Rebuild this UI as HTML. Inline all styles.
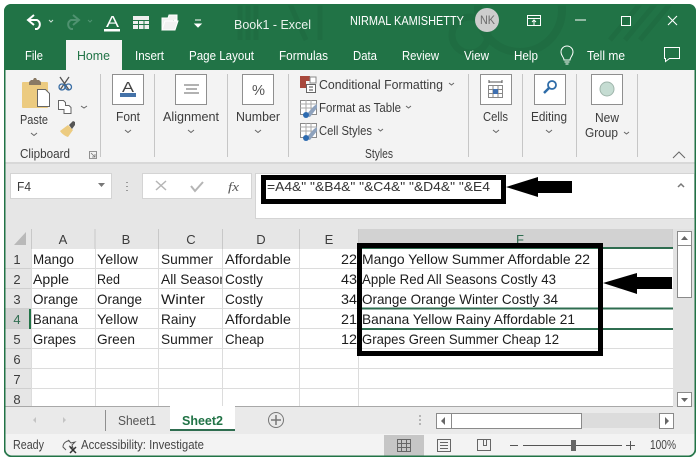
<!DOCTYPE html>
<html><head><meta charset="utf-8"><style>
html,body{margin:0;padding:0;background:#fff;width:699px;height:464px;overflow:hidden}
svg{display:block}
text{font-family:"Liberation Sans",sans-serif;font-size:13px;fill:#3c3c3c}
.w{fill:#fff}.d{fill:#1c1c1c}.g{stroke:#dcdcdc;stroke-width:1;fill:none}.c{fill:none;stroke:#666;stroke-width:1}
</style></head><body>
<svg width="699" height="464" viewBox="0 0 699 464" xmlns="http://www.w3.org/2000/svg">
<defs><clipPath id="win"><rect x="4" y="4" width="692" height="453" rx="7"/></clipPath>
<clipPath id="cc"><rect x="158" y="249" width="64" height="160"/></clipPath>
<clipPath id="ce"><rect x="299" y="249" width="58" height="160"/></clipPath></defs>
<g clip-path="url(#win)">
<rect x="4" y="4" width="692" height="453" fill="#217346"/>
<!-- watermark -->
<g stroke="#1f6d42" stroke-width="5" fill="none"><path d="M240 4v36M248 4v36M256 4v36M290 4l16 36M320 4v36"/><circle cx="470" cy="35" r="18" stroke-width="7"/><circle cx="520" cy="10" r="42" stroke-width="8"/><path d="M640 4l-30 36M655 4l-30 36M670 4l-30 36"/></g>
<!-- ribbon -->
<rect x="5" y="70" width="690" height="92" fill="#f3f3f3"/>
<rect x="5" y="162" width="690" height="2" fill="#d8d8d8"/>
<rect x="5" y="164" width="690" height="65" fill="#e6e6e6"/>
<rect x="66" y="40" width="56" height="30" fill="#f3f3f3"/>
<!-- QAT -->
<path d="M34 15l-6 5 6 5M28 20h9a5 5 0 0 1 0 9h-2" fill="none" stroke="#fff" stroke-width="2"/>
<path d="M49 20l2 2 2-2" fill="none" stroke="#cfe2d7"/>
<path d="M73 15l6 5-6 5M79 20h-8a5 5 0 0 0 0 9h2" fill="none" stroke="#4f9270" stroke-width="2"/>
<path d="M88 20l2 2 2-2" fill="none" stroke="#4f9270"/>
<text x="106" y="27" style="font-size:16px;fill:#fff" textLength="13" lengthAdjust="spacingAndGlyphs">A</text>
<rect x="104" y="29" width="16" height="2.500" fill="#fff"/>
<path d="M133 16h16v13h-16z" fill="#eee"/><path d="M133 20.500h16M133 24.500h16M138.500 20v9M144 20v9" stroke="#217346"/>
<path d="M162 30V18h6l1-3h8v5h-3M162 30l3-9h13l-3 9z" fill="#f1f1f1" stroke="#fff"/>
<path d="M195 20h6M195 24l3 3 3-3z" fill="#fff" stroke="#fff"/>
<text x="234" y="29" class="w" style="fill:#eaf2ed" textLength="77" lengthAdjust="spacingAndGlyphs">Book1 - Excel</text>
<text x="350" y="25" style="fill:#fff" textLength="114" lengthAdjust="spacingAndGlyphs">NIRMAL KAMISHETTY</text>
<circle cx="487" cy="20" r="12" fill="#cdcdcd"/>
<text x="480" y="24" style="fill:#6b6b6b;font-size:12px" textLength="15" lengthAdjust="spacingAndGlyphs">NK</text>
<path d="M527.500 15.500h13v10h-13zM527.500 18.500h13M534 25v-5M532 22l2-2 2 2" fill="none" stroke="#fff"/>
<path d="M575 20h11" stroke="#fff"/>
<rect x="621.500" y="16.500" width="9" height="9" fill="none" stroke="#fff"/>
<path d="M668 16l9 9M677 16l-9 9" stroke="#fff" stroke-width="1.100"/>
<!-- tabs -->
<g style="fill:#fff">
<text x="25" y="60" style="fill:#fff" textLength="18" lengthAdjust="spacingAndGlyphs">File</text>
<text x="77" y="60" style="fill:#217346" textLength="33" lengthAdjust="spacingAndGlyphs">Home</text>
<text x="135" y="60" style="fill:#fff" textLength="29" lengthAdjust="spacingAndGlyphs">Insert</text>
<text x="189" y="60" style="fill:#fff" textLength="65" lengthAdjust="spacingAndGlyphs">Page Layout</text>
<text x="279" y="60" style="fill:#fff" textLength="49" lengthAdjust="spacingAndGlyphs">Formulas</text>
<text x="353" y="60" style="fill:#fff" textLength="24" lengthAdjust="spacingAndGlyphs">Data</text>
<text x="402" y="60" style="fill:#fff" textLength="37" lengthAdjust="spacingAndGlyphs">Review</text>
<text x="464" y="60" style="fill:#fff" textLength="25" lengthAdjust="spacingAndGlyphs">View</text>
<text x="514" y="60" style="fill:#fff" textLength="24" lengthAdjust="spacingAndGlyphs">Help</text>
<text x="587" y="60" style="fill:#fff" textLength="38" lengthAdjust="spacingAndGlyphs">Tell me</text>
</g>
<path d="M564 60c0-3-3-4-3-8a6 6 0 0 1 12 0c0 4-3 5-3 8zM564.500 62h5M565.500 64h3" fill="none" stroke="#fff"/>
<path d="M664.500 47.500h15v11h-10l-4 3v-3h-1z" fill="none" stroke="#fff"/>
<!-- separators -->
<path d="M100.500 74v83M154.500 74v83M227.500 74v83M288.500 74v83M468.500 74v83M522.500 74v83M576.500 74v83M637.500 74v83" stroke="#c6c6c6"/>
<!-- Paste -->
<rect x="22" y="82" width="26" height="26" rx="1" fill="#eccb80"/>
<path d="M29 82l2-2h2l1-2h2l1 2h2l2 2v3H29z" fill="#8a7a64"/>
<path d="M37.500 89.500h8l4 4v13h-12z" fill="#fff" stroke="#666"/>
<path d="M60 77l9 13M69 77l-9 13" stroke="#555" stroke-width="1.300"/>
<circle cx="62" cy="87" r="3" fill="none" stroke="#3a6ea5" stroke-width="1.300"/><circle cx="68.500" cy="87" r="3" fill="none" stroke="#3a6ea5" stroke-width="1.300"/>
<path d="M58.500 100.500h5l2 2v3h3.500l2 2v6h-7v-4h-5.500z" fill="#fff" stroke="#666"/>
<path d="M81 106l3 2 3-2" fill="none" stroke="#666"/>
<path d="M60 131l8-6 5 5-5 7c-3-1-6-3-8-6z" fill="#eccb80"/><path d="M69 125l4-4 2 1 0 3-3 4z" fill="#555"/>
<text x="20" y="124" textLength="28" lengthAdjust="spacingAndGlyphs">Paste</text>
<path d="M31 133l3 2.500 3-2.500" class="c"/>
<text x="20" y="158" textLength="50" lengthAdjust="spacingAndGlyphs">Clipboard</text>
<path d="M89.500 151.500h7v7h-7zM91 153l4 4M95 154v3h-3" fill="none" stroke="#777" stroke-width=".8"/>
<!-- group buttons -->
<g fill="#fff" stroke="#8f8f8f"><rect x="112.500" y="74.500" width="31" height="30"/><rect x="175.500" y="74.500" width="31" height="30"/><rect x="242.500" y="74.500" width="31" height="30"/><rect x="480.500" y="74.500" width="31" height="30"/><rect x="534.500" y="74.500" width="31" height="30"/><rect x="591.500" y="74.500" width="31" height="30"/></g>
<text x="122" y="92" style="font-size:15px;fill:#444" textLength="12" lengthAdjust="spacingAndGlyphs">A</text><rect x="120" y="93" width="16" height="4" fill="#4472a8"/>
<path d="M184 85h15M186 89h11M184 93h15" stroke="#666"/>
<text x="252" y="95" style="font-size:15px;fill:#555" textLength="13" lengthAdjust="spacingAndGlyphs">%</text>
<path d="M488.500 85.500h14v12h-14zM493 86v11M498 86v11M489 89.500h13M489 93.500h13" fill="none" stroke="#888"/><rect x="493" y="89" width="5" height="5" fill="#3e6fb0"/><path d="M489 82h13M489 80v3M502 80v3" stroke="#555"/>
<circle cx="552" cy="85" r="4" fill="none" stroke="#2e6ca8" stroke-width="1.800"/><path d="M549 88l-5 5" stroke="#2e6ca8" stroke-width="2.500"/>
<circle cx="607" cy="89" r="7" fill="#c5dcd2" stroke="#9fb5ab"/>
<g>
<text x="116" y="121" textLength="24" lengthAdjust="spacingAndGlyphs">Font</text>
<text x="163" y="121" textLength="56" lengthAdjust="spacingAndGlyphs">Alignment</text>
<text x="236" y="121" textLength="44" lengthAdjust="spacingAndGlyphs">Number</text>
<text x="483" y="121" textLength="25" lengthAdjust="spacingAndGlyphs">Cells</text>
<text x="531" y="121" textLength="36" lengthAdjust="spacingAndGlyphs">Editing</text>
<text x="595" y="122" textLength="24" lengthAdjust="spacingAndGlyphs">New</text>
<text x="585" y="137" textLength="33" lengthAdjust="spacingAndGlyphs">Group</text>
</g>
<path d="M125 130l3 2.500 3-2.500M188 130l3 2.500 3-2.500M255 130l3 2.500 3-2.500M493 130l3 2.500 3-2.500M546 130l3 2.500 3-2.500M624 132l2.500 2 2.500-2M449 83l2.500 2 2.500-2M406 106l2.500 2 2.500-2M378 129l2.500 2 2.500-2" class="c"/>
<!-- styles -->
<rect x="300" y="76" width="10" height="5" fill="#a8493d"/><rect x="300" y="81" width="6" height="7" fill="#a8493d"/><rect x="310" y="77" width="6" height="6" fill="#fff" stroke="#888"/>
<rect x="306.500" y="84.500" width="9" height="8" fill="#fff" stroke="#666"/><path d="M309 87h4M309 90h4" stroke="#444"/>
<g id="st"><path d="M300.500 100.500h16v14h-16z" fill="#fff" stroke="#8a8a8a"/><path d="M300 104h17M300 108h17M306 100v14M311 100v14" stroke="#aaa"/><path d="M305 116l9-10 3-2v4l-7 9z" fill="#8ea2bd"/><circle cx="306" cy="115" r="3" fill="#2d6bb0"/></g>
<use href="#st" y="23"/>
<text x="319" y="89" textLength="124" lengthAdjust="spacingAndGlyphs">Conditional Formatting</text>
<text x="319" y="112" textLength="82" lengthAdjust="spacingAndGlyphs">Format as Table</text>
<text x="319" y="135" textLength="53" lengthAdjust="spacingAndGlyphs">Cell Styles</text>
<text x="365" y="158" textLength="28" lengthAdjust="spacingAndGlyphs">Styles</text>
<path d="M673 158l6-6 6 6" fill="none" stroke="#666"/>
<!-- formula bar -->
<rect x="10.500" y="173.500" width="101" height="25" fill="#fff" stroke="#d4d4d4"/>
<text x="17" y="191" textLength="14" lengthAdjust="spacingAndGlyphs">F4</text>
<path d="M98 183h7l-3.500 4z" fill="#777"/>
<path d="M127 182v1M127 186v1M127 190v1" stroke="#999" stroke-width="2"/>
<rect x="142.500" y="173.500" width="109" height="25" fill="#fff" stroke="#d4d4d4"/>
<path d="M156 181l10 9M166 181l-10 9" stroke="#b5b5b5" stroke-width="1.500"/>
<path d="M191 186l4 5 8-9" stroke="#b5b5b5" stroke-width="2" fill="none"/>
<text x="228" y="191" style="font-family:'Liberation Serif',serif;font-style:italic;fill:#555" textLength="11" lengthAdjust="spacingAndGlyphs">fx</text>
<rect x="255.500" y="173.500" width="439" height="45" fill="#fff" stroke="#d4d4d4"/>
<rect x="263.500" y="177.500" width="240" height="24" fill="none" stroke="#000" stroke-width="5"/>
<text x="267" y="191" style="fill:#333" textLength="223" lengthAdjust="spacingAndGlyphs">=A4&amp;" "&amp;B4&amp;" "&amp;C4&amp;" "&amp;D4&amp;" "&amp;E4</text>
<path d="M506 187l32-10v4h34v12h-34v4z" fill="#000"/>
<path d="M678 187l3-3 3 3" fill="none" stroke="#777" stroke-width="1.500"/>
<!-- grid -->
<rect x="5" y="229" width="668" height="177" fill="#fff"/>
<rect x="5" y="229" width="353" height="20" fill="#e6e6e6"/>
<rect x="358" y="229" width="315" height="20" fill="#d2d2d2"/>
<rect x="5" y="249" width="26" height="157" fill="#e6e6e6"/>
<rect x="5" y="309" width="26" height="20" fill="#d2d2d2"/>
<path d="M26 232v13H14z" fill="#b9b9b9"/>
<path d="M31.500 229v177M95 229v177M158.500 229v177M222.500 229v177M299.500 229v177M358.500 229v177M673 229v177" stroke="#c8c8c8" fill="none"/>
<rect x="31" y="249" width="642" height="157" fill="#fff"/>
<g class="g" stroke="#dcdcdc"><path d="M31 268.500h642M31 288.500h642M31 308.500h642M31 328.500h642M31 348.500h642M31 368.500h642M31 388.500h642M31.500 249v157M95.500 249v157M158.500 249v157M222.500 249v157M299.500 249v157M358.500 249v157"/></g>
<path d="M5 268.500h26M5 288.500h26M5 308.500h26M5 328.500h26M5 348.500h26M5 368.500h26M5 388.500h26" stroke="#cfcfcf"/>
<path d="M30 309v20" stroke="#217346" stroke-width="2"/>
<path d="M358 248h315M358 308.500h315M358 329h315" stroke="#2f6d50" stroke-width="2"/>
<path d="M5 406.500h668" stroke="#a8a8a8"/>
<g text-anchor="middle" style="fill:#444">
<text x="63" y="244" text-anchor="middle">A</text><text x="126" y="244" text-anchor="middle">B</text><text x="191" y="244" text-anchor="middle">C</text><text x="261" y="244" text-anchor="middle">D</text><text x="329" y="244" text-anchor="middle">E</text><text x="520" y="244" text-anchor="middle" style="fill:#2f6d50">F</text>
<text x="17" y="264" text-anchor="middle">1</text><text x="17" y="284" text-anchor="middle">2</text><text x="17" y="304" text-anchor="middle">3</text><text x="17" y="324" text-anchor="middle" style="fill:#2f6d50">4</text><text x="17" y="344" text-anchor="middle">5</text><text x="17" y="364" text-anchor="middle">6</text><text x="17" y="384" text-anchor="middle">7</text><text x="17" y="404" text-anchor="middle">8</text>
</g>
<g>
<text class="d" style="font-size:14px" x="33" y="264" textLength="41" lengthAdjust="spacingAndGlyphs">Mango</text><text class="d" style="font-size:14px" x="97" y="264" textLength="41" lengthAdjust="spacingAndGlyphs">Yellow</text><text class="d" style="font-size:14px" x="161" y="264" textLength="52" lengthAdjust="spacingAndGlyphs">Summer</text><text class="d" style="font-size:14px" x="225" y="264" textLength="66" lengthAdjust="spacingAndGlyphs">Affordable</text>
<text class="d" style="font-size:14px" x="33" y="284" textLength="36" lengthAdjust="spacingAndGlyphs">Apple</text><text class="d" style="font-size:14px" x="97" y="284" textLength="23" lengthAdjust="spacingAndGlyphs">Red</text><text class="d" style="font-size:14px" x="161" y="284" clip-path="url(#cc)" textLength="73" lengthAdjust="spacingAndGlyphs">All Seasons</text><text class="d" style="font-size:14px" x="225" y="284" textLength="38" lengthAdjust="spacingAndGlyphs">Costly</text>
<text class="d" style="font-size:14px" x="33" y="304" textLength="45" lengthAdjust="spacingAndGlyphs">Orange</text><text class="d" style="font-size:14px" x="97" y="304" textLength="45" lengthAdjust="spacingAndGlyphs">Orange</text><text class="d" style="font-size:14px" x="161" y="304" textLength="44" lengthAdjust="spacingAndGlyphs">Winter</text><text class="d" style="font-size:14px" x="225" y="304" textLength="38" lengthAdjust="spacingAndGlyphs">Costly</text>
<text class="d" style="font-size:14px" x="33" y="324" textLength="45" lengthAdjust="spacingAndGlyphs">Banana</text><text class="d" style="font-size:14px" x="97" y="324" textLength="41" lengthAdjust="spacingAndGlyphs">Yellow</text><text class="d" style="font-size:14px" x="161" y="324" textLength="35" lengthAdjust="spacingAndGlyphs">Rainy</text><text class="d" style="font-size:14px" x="225" y="324" textLength="66" lengthAdjust="spacingAndGlyphs">Affordable</text>
<text class="d" style="font-size:14px" x="33" y="344" textLength="43" lengthAdjust="spacingAndGlyphs">Grapes</text><text class="d" style="font-size:14px" x="97" y="344" textLength="38" lengthAdjust="spacingAndGlyphs">Green</text><text class="d" style="font-size:14px" x="161" y="344" textLength="52" lengthAdjust="spacingAndGlyphs">Summer</text><text class="d" style="font-size:14px" x="225" y="344" textLength="39" lengthAdjust="spacingAndGlyphs">Cheap</text>
<text class="d" style="font-size:14px" x="341" y="264" textLength="16" lengthAdjust="spacingAndGlyphs">22</text><text class="d" style="font-size:14px" x="341" y="284" textLength="16" lengthAdjust="spacingAndGlyphs">43</text><text class="d" style="font-size:14px" x="341" y="304" textLength="16" lengthAdjust="spacingAndGlyphs">34</text><text class="d" style="font-size:14px" x="341" y="324" textLength="16" lengthAdjust="spacingAndGlyphs">21</text><text class="d" style="font-size:14px" x="341" y="344" textLength="16" lengthAdjust="spacingAndGlyphs">12</text>
<text class="d" style="font-size:14px" x="362" y="264" textLength="228" lengthAdjust="spacingAndGlyphs">Mango Yellow Summer Affordable 22</text>
<text class="d" style="font-size:14px" x="362" y="284" textLength="194" lengthAdjust="spacingAndGlyphs">Apple Red All Seasons Costly 43</text>
<text class="d" style="font-size:14px" x="362" y="304" textLength="196" lengthAdjust="spacingAndGlyphs">Orange Orange Winter Costly 34</text>
<text class="d" style="font-size:14px" x="362" y="324" textLength="213" lengthAdjust="spacingAndGlyphs">Banana Yellow Rainy Affordable 21</text>
<text class="d" style="font-size:14px" x="362" y="344" textLength="197" lengthAdjust="spacingAndGlyphs">Grapes Green Summer Cheap 12</text>
</g>
<rect x="359.500" y="245.500" width="241" height="108" fill="none" stroke="#000" stroke-width="5"/>
<path d="M603 283l34-10v4h35v12h-35v5z" fill="#000"/>
<!-- vscroll -->
<rect x="673" y="229" width="22" height="178" fill="#e2e2e2"/>
<rect x="677.500" y="231.500" width="14" height="14" fill="#fff" stroke="#8a8a8a"/><path d="M681 240h7l-3.500-4z" fill="#666"/>
<rect x="677.500" y="245.500" width="14" height="52" fill="#fff" stroke="#8a8a8a"/>
<rect x="677.500" y="392.500" width="14" height="14" fill="#fff" stroke="#8a8a8a"/><path d="M681 398h7l-3.500 4z" fill="#666"/>
<!-- sheet tabs -->
<rect x="5" y="407" width="690" height="28" fill="#eaeaea"/>
<path d="M33 420l3-3v6zM63 417l3 3-3 3z" fill="#c4c4c4"/>
<path d="M105.500 410v21" stroke="#8f8f8f"/>
<text x="118" y="425" style="fill:#555" textLength="38" lengthAdjust="spacingAndGlyphs">Sheet1</text>
<rect x="170" y="406" width="65" height="24" fill="#fff"/><rect x="170" y="429" width="65" height="2" fill="#2f6d50"/>
<text x="182" y="425" style="fill:#217346;font-weight:bold" textLength="41" lengthAdjust="spacingAndGlyphs">Sheet2</text>
<circle cx="276" cy="420" r="7.500" fill="none" stroke="#777"/><path d="M271 420h10M276 415v10" stroke="#777" stroke-width="1.500"/>
<path d="M420 415v2M420 419v2M420 423v2" stroke="#b5b5b5" stroke-width="2"/>
<rect x="581" y="413" width="78" height="15" fill="#dcdcdc"/>
<rect x="436.500" y="413.500" width="15" height="15" fill="#fff" stroke="#8a8a8a"/><path d="M441 421l4-4v8z" fill="#666"/>
<rect x="451.500" y="413.500" width="130" height="15" fill="#fff" stroke="#8a8a8a"/>
<rect x="659.500" y="413.500" width="14" height="15" fill="#fff" stroke="#8a8a8a"/><path d="M665 417l4 4-4 4z" fill="#666"/>
<!-- status -->
<rect x="5" y="434" width="690" height="22" fill="#f3f3f3"/>
<text x="13" y="449" style="fill:#444" textLength="31" lengthAdjust="spacingAndGlyphs">Ready</text>
<path d="M70 441a6 6 0 0 0-7 6l3 3M68 440l3 3 4-1-3 3 1 3-4-2" fill="none" stroke="#555"/><path d="M70 447l6 6M76 447l-6 6" stroke="#333" stroke-width="1.500"/>
<text x="81" y="449" style="fill:#444" textLength="123" lengthAdjust="spacingAndGlyphs">Accessibility: Investigate</text>
<rect x="384" y="435" width="40" height="21" fill="#c6c6c6"/>
<path d="M397.500 439.500h13v12h-13zM397.500 443.500h13M397.500 447.500h13M401.500 439.500v12M406.500 439.500v12" fill="none" stroke="#666"/>
<path d="M437.500 439.500h13v12h-13z" fill="none" stroke="#666"/><path d="M440 442.500h8M440 445.500h8M440 448.500h8" stroke="#666"/>
<path d="M477.500 439.500h13v11h-13zM483.500 439.500v6h3v-6" fill="none" stroke="#666"/>
<path d="M510 445.500h8M523 445.500h99M626 445.500h9M630.500 441v9" stroke="#555"/>
<rect x="571" y="440" width="5" height="11" fill="#666"/>
<text x="650" y="449" style="fill:#444" textLength="26" lengthAdjust="spacingAndGlyphs">100%</text>
</g>
<rect x="4.750" y="4.750" width="690.500" height="451.500" rx="7" fill="none" stroke="#217346" stroke-width="1.500"/>
</svg>
</body></html>
